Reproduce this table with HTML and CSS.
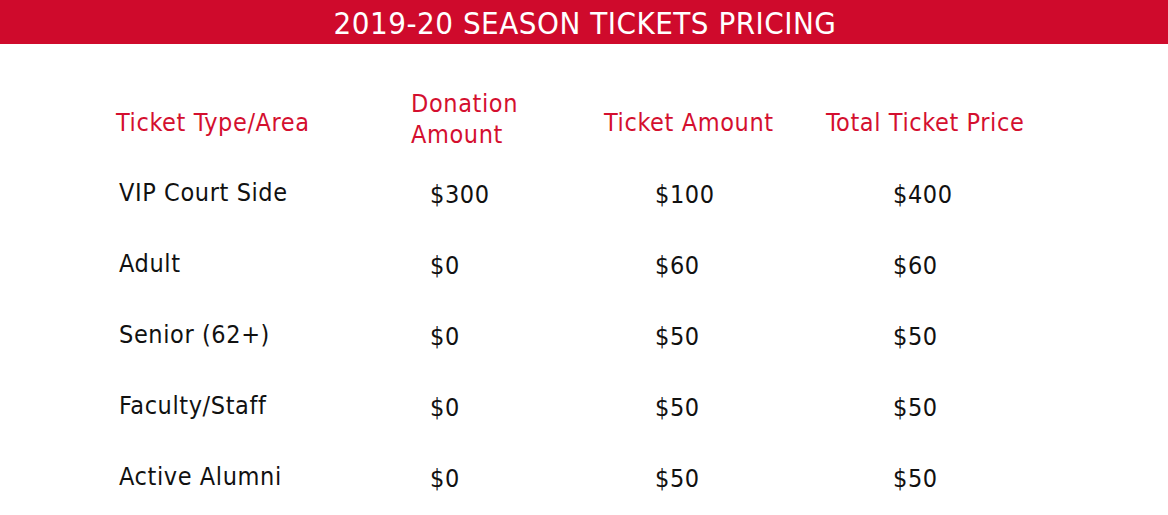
FILE: index.html
```html
<!DOCTYPE html>
<html>
<head>
<meta charset="utf-8">
<link rel="stylesheet" href="styles.css">
</head>
<body>
<div class="page">
  <header class="banner">2019-20 SEASON TICKETS PRICING</header>
  <div class="table">
    <div class="cell head c1">Ticket Type/Area</div>
    <div class="cell head c2 two">Donation<br>Amount</div>
    <div class="cell head c3">Ticket Amount</div>
    <div class="cell head c4">Total Ticket Price</div>

    <div class="cell name">VIP Court Side</div>
    <div class="cell val v2">$300</div>
    <div class="cell val v3">$100</div>
    <div class="cell val v4">$400</div>

    <div class="cell name">Adult</div>
    <div class="cell val v2">$0</div>
    <div class="cell val v3">$60</div>
    <div class="cell val v4">$60</div>

    <div class="cell name">Senior (62+)</div>
    <div class="cell val v2">$0</div>
    <div class="cell val v3">$50</div>
    <div class="cell val v4">$50</div>

    <div class="cell name">Faculty/Staff</div>
    <div class="cell val v2">$0</div>
    <div class="cell val v3">$50</div>
    <div class="cell val v4">$50</div>

    <div class="cell name">Active Alumni</div>
    <div class="cell val v2">$0</div>
    <div class="cell val v3">$50</div>
    <div class="cell val v4">$50</div>
  </div>
</div>
</body>
</html>
```
FILE: styles.css
```css
html, body {
  margin: 0;
  padding: 0;
  background: #ffffff;
}
body {
  width: 1168px;
  height: 515px;
  overflow: hidden;
  font-family: "DejaVu Sans Condensed", "DejaVu Sans", sans-serif;
  font-stretch: condensed;
}
.banner {
  height: 44px;
  background: #cf0a2c;
  color: #ffffff;
  font-size: 31px;
  letter-spacing: 0.5px;
  line-height: 46px;
  text-align: center;
  padding-left: 2px;
}
.table {
  display: grid;
  grid-template-columns: 295px 193px 222px 1fr;
  grid-template-rows: 123px repeat(5, 71px);
  margin-left: 116px;
  margin-top: -10px;
}
.cell {
  display: flex;
  align-items: center;
  font-size: 25px;
  letter-spacing: 0.6px;
  white-space: nowrap;
}
.head {
  color: #d40f2f;
  align-items: flex-end;
  padding-bottom: 20px;
}
.head.two {
  line-height: 31px;
  padding-bottom: 7px;
}
.name {
  color: #111111;
  padding-left: 3px;
}
.val {
  color: #111111;
  padding-top: 4px;
}
.v2 { padding-left: 19px; }
.v3 { padding-left: 51px; }
.v4 { padding-left: 67px; }
```
